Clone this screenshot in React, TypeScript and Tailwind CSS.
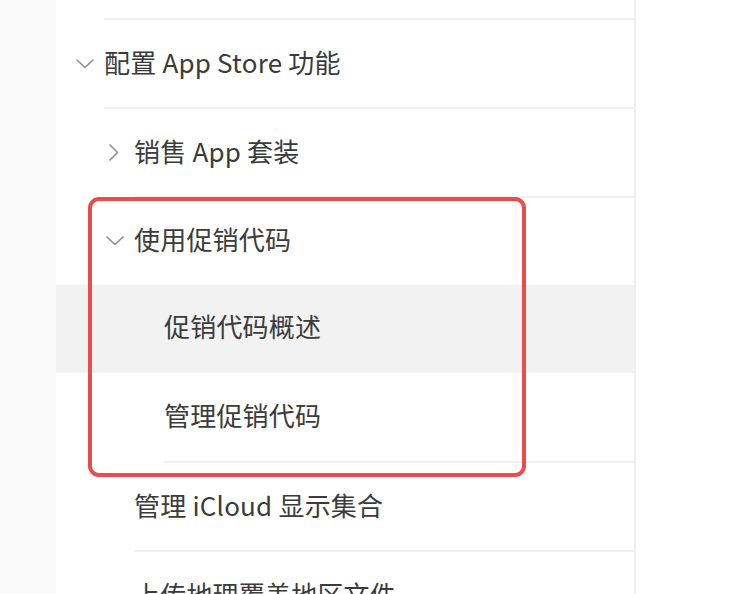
import React from "react";

type ChevronKind = "down" | "right" | null;

function Chevron({ kind }: { kind: ChevronKind }) {
  if (kind === "down") {
    return (
      <svg width="18" height="10" viewBox="0 0 18 10" className="ml-[2px]">
        <polyline points="1,1 9,8.5 17,1" fill="none" stroke="#8f8f8f" strokeWidth="1.6" strokeLinecap="round" strokeLinejoin="round" />
      </svg>
    );
  }
  if (kind === "right") {
    return (
      <svg width="10" height="17" viewBox="0 0 10 17" className="ml-[5px]">
        <polyline points="1,1 8.5,8.5 1,16" fill="none" stroke="#8f8f8f" strokeWidth="1.6" strokeLinecap="round" strokeLinejoin="round" />
      </svg>
    );
  }
  return null;
}

function Row({
  indentClass,
  chevron = null,
  text,
  divider = true,
  highlight = false,
  heightClass = "h-[89px]",
}: {
  indentClass: string;
  chevron?: ChevronKind;
  text: string;
  divider?: boolean;
  highlight?: boolean;
  heightClass?: string;
}) {
  return (
    <div className={`flex ${heightClass} ${highlight ? "bg-[#f2f2f2]" : ""}`}>
      <div
        className={`${indentClass} flex flex-1 items-center border-b-2 ${
          divider ? "border-[#efefef]" : "border-transparent"
        }`}
      >
        <span className="-ml-[30px] flex w-[30px] items-center">
          <Chevron kind={chevron} />
        </span>
        <span className="whitespace-nowrap pb-[4px] tracking-[0.2px]">{text}</span>
      </div>
    </div>
  );
}

export default function App() {
  return (
    <div
      className="flex h-[594px] w-[738px] overflow-hidden bg-white text-[26px] leading-none text-[#3b3b3b]"
      style={{ fontFamily: '"Noto Sans CJK SC", "Noto Sans", sans-serif' }}
    >
      <div className="w-[56px] shrink-0 bg-[#f9f9f9]" />
      <div className="relative w-[580px] shrink-0 border-r-2 border-[#efefef]">
        <div className="flex h-[20px]">
          <div className="ml-[48px] flex-1 border-b-2 border-[#efefef]" />
        </div>
        <Row indentClass="ml-[48px]" chevron="down" text="配置 App Store 功能" />
        <Row indentClass="ml-[78px]" chevron="right" text="销售 App 套装" />
        <Row indentClass="ml-[78px]" chevron="down" text="使用促销代码" divider={false} heightClass="h-[87px]" />
        <Row indentClass="ml-[108px]" text="促销代码概述" divider={false} highlight heightClass="h-[88px]" />
        <Row indentClass="ml-[108px]" text="管理促销代码" heightClass="h-[90px]" />
        <Row indentClass="ml-[78px]" text="管理 iCloud 显示集合" />
        <Row indentClass="ml-[78px]" text="上传地理覆盖地区文件" />
        <div className="pointer-events-none absolute left-[32px] top-[197px] h-[280px] w-[438px] rounded-[11px] border-[4px] border-[#e84c4d]" />
      </div>
      <div className="flex-1 bg-white" />
    </div>
  );
}
